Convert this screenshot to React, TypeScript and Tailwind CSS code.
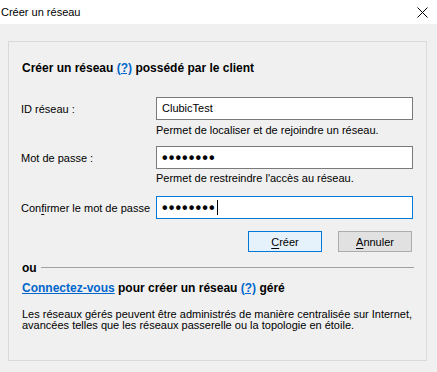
import React from 'react';

const font = { fontFamily: '"Liberation Sans", Arial, sans-serif' };

function Field({ label, children, focused }: { label: React.ReactNode; children: React.ReactNode; focused?: boolean }) {
  return (
    <div className="flex items-center">
      <div className="w-[135px] text-[11px] leading-[16px]">{label}</div>
      <div
        className={`w-[257px] h-[23px] bg-white border flex items-center pl-[5px] ${
          focused ? 'border-[#0078d7]' : 'border-[#7a7a7a]'
        }`}
      >
        {children}
      </div>
    </div>
  );
}

function Dots({ caret }: { caret?: boolean }) {
  return (
    <span className="flex items-center">
      <span className="text-[16px] leading-[16px] font-bold tracking-[1.1px]">••••••••</span>
      {caret && <span className="inline-block w-px h-[15px] bg-black ml-[1px]" />}
    </span>
  );
}

export default function App() {
  return (
    <div className="w-[437px] h-[372px] bg-[#f0f0f0] text-black flex flex-col overflow-hidden" style={font}>
      <div className="h-[24px] bg-white flex items-center justify-between pl-[1px] pr-[9px]">
        <span className="text-[11px] leading-[16px]">Créer un réseau</span>
        <svg width="11" height="11" viewBox="0 0 11 11" className="mt-[1px]">
          <path d="M0.5 0.5 L10.5 10.5 M10.5 0.5 L0.5 10.5" stroke="#000" strokeWidth="1" fill="none" />
        </svg>
      </div>

      <div className="mx-[8px] mt-[17px] w-[419px] h-[320px] border border-[#dadada] pl-[12px] pr-[12px] pt-[18px]">
        <div className="text-[12px] leading-[16px] font-bold pl-[1px]">
          Créer un réseau <span className="text-[#0066cc] underline">(?)</span> possédé par le client
        </div>

        <div className="mt-[21px]">
          <Field label="ID réseau :">
            <span className="text-[11px]">ClubicTest</span>
          </Field>
        </div>
        <div className="ml-[135px] mt-[2px] text-[11px] leading-[16px]">Permet de localiser et de rejoindre un réseau.</div>

        <div className="mt-[8px]">
          <Field label="Mot de passe :">
            <Dots />
          </Field>
        </div>
        <div className="ml-[135px] mt-[1px] text-[11px] leading-[16px]">Permet de restreindre l'accès au réseau.</div>

        <div className="mt-[10px]">
          <Field
            focused
            label={
              <>
                Con<u className="underline-offset-[2px]">f</u>irmer le mot de passe
              </>
            }
          >
            <Dots caret />
          </Field>
        </div>

        <div className="mt-[12px] flex justify-end gap-[16px] mr-[2px]">
          <button className="w-[74px] h-[21px] border border-[#0078d7] bg-[#e5f1fb] text-[11px] leading-[16px] flex items-center justify-center">
            <span>
              <u className="underline-offset-[2px]">C</u>réer
            </span>
          </button>
          <button className="w-[74px] h-[21px] border border-[#adadad] bg-[#e1e1e1] text-[11px] leading-[16px] flex items-center justify-center">
            <span>
              <u className="underline-offset-[2px]">A</u>nnuler
            </span>
          </button>
        </div>

        <div className="mt-[8px] flex items-center gap-[4px] pl-[1px]">
          <span className="text-[12px] leading-[16px] font-bold">ou</span>
          <div className="flex-1 h-px bg-[#a0a0a0] mt-[-1px]" />
        </div>

        <div className="mt-[4px] text-[12px] leading-[16px] font-bold pl-[1px]">
          <span className="text-[#0066cc] underline">Connectez-vous</span> pour créer un réseau{' '}
          <span className="text-[#0066cc] underline">(?)</span> géré
        </div>

        <p className="mt-[13px] text-[11px] leading-[11px] pl-[1px]">
          Les réseaux gérés peuvent être administrés de manière centralisée sur Internet,
          <br />
          avancées telles que les réseaux passerelle ou la topologie en étoile.
        </p>
      </div>
    </div>
  );
}
